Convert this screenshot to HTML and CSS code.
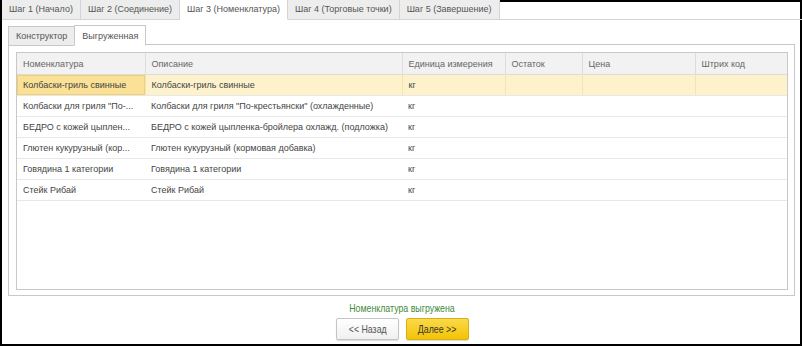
FILE: index.html
```html
<!DOCTYPE html>
<html lang="ru">
<head>
    <meta charset="UTF-8">
    <title>Мастер выгрузки</title>
    <link rel="stylesheet" href="styles.css">
</head>
<body>
    <div class="window">
        <div class="steps">
            <div class="step">Шаг 1 (Начало)</div>
            <div class="step">Шаг 2 (Соединение)</div>
            <div class="step active">Шаг 3 (Номенклатура)</div>
            <div class="step">Шаг 4 (Торговые точки)</div>
            <div class="step">Шаг 5 (Завершение)</div>
            <div class="steps-fill"></div>
        </div>

        <div class="page">
            <div class="subtabs">
                <div class="subtab">Конструктор</div>
                <div class="subtab active">Выгруженная</div>
                <div class="subtabs-fill"></div>
            </div>

            <div class="panel">
                <div class="grid">
                    <table>
                        <colgroup>
                            <col class="c-name">
                            <col class="c-desc">
                            <col class="c-unit">
                            <col class="c-rest">
                            <col class="c-price">
                            <col class="c-code">
                        </colgroup>
                        <thead>
                            <tr>
                                <th>Номенклатура</th>
                                <th>Описание</th>
                                <th>Единица измерения</th>
                                <th>Остаток</th>
                                <th>Цена</th>
                                <th>Штрих код</th>
                            </tr>
                        </thead>
                        <tbody>
                            <tr class="selected">
                                <td class="focus">Колбаски-гриль свинные</td>
                                <td>Колбаски-гриль свинные</td>
                                <td>кг</td>
                                <td></td>
                                <td></td>
                                <td></td>
                            </tr>
                            <tr>
                                <td>Колбаски для гриля "По-...</td>
                                <td>Колбаски для гриля "По-крестьянски" (охлажденные)</td>
                                <td>кг</td>
                                <td></td>
                                <td></td>
                                <td></td>
                            </tr>
                            <tr>
                                <td>БЕДРО с кожей цыплен...</td>
                                <td>БЕДРО с кожей цыпленка-бройлера охлажд. (подложка)</td>
                                <td>кг</td>
                                <td></td>
                                <td></td>
                                <td></td>
                            </tr>
                            <tr>
                                <td>Глютен кукурузный (кор...</td>
                                <td>Глютен кукурузный (кормовая добавка)</td>
                                <td>кг</td>
                                <td></td>
                                <td></td>
                                <td></td>
                            </tr>
                            <tr>
                                <td>Говядина 1 категории</td>
                                <td>Говядина 1 категории</td>
                                <td>кг</td>
                                <td></td>
                                <td></td>
                                <td></td>
                            </tr>
                            <tr>
                                <td>Стейк Рибай</td>
                                <td>Стейк Рибай</td>
                                <td>кг</td>
                                <td></td>
                                <td></td>
                                <td></td>
                            </tr>
                        </tbody>
                    </table>
                </div>
            </div>

            <div class="status"><span class="narrow">Номенклатура выгружена</span></div>

            <div class="actions">
                <button class="btn"><span class="narrow">&lt;&lt; Назад</span></button>
                <button class="btn primary"><span class="narrow">Далее &gt;&gt;</span></button>
            </div>
        </div>
    </div>
</body>
</html>
```

FILE: styles.css
```css
body {
    margin: 0;
    padding: 0;
    background-color: #fff;
    font-family: "Liberation Sans", Arial, sans-serif;
    font-size: 9px;
    color: #444;
}

.window {
    width: 798px;
    height: 344px;
    border: 2px solid #000;
    border-top: none;
    display: flex;
    flex-direction: column;
}

/* step tabs */
.steps {
    display: flex;
    height: 20px;
}

.step {
    height: 19px;
    line-height: 19px;
    padding: 0 7px;
    background-color: #ededed;
    border: 1px solid #d4d4d4;
    border-top: none;
    border-left: none;
    color: #555;
    white-space: nowrap;
}

.step.active {
    background-color: #fff;
    border-bottom-color: #fff;
}

.steps-fill {
    flex: 1;
    border-top: 2px solid #000;
    border-bottom: 1px solid #d4d4d4;
    margin-right: -2px;
}

.page {
    flex: 1;
    display: flex;
    flex-direction: column;
    padding: 5px 5px 0 6px;
}

/* inner tabs */
.subtabs {
    display: flex;
    height: 20px;
}

.subtab {
    margin-top: 1px;
    height: 18px;
    line-height: 18px;
    padding: 0 7px;
    background-color: #ededed;
    border: 1px solid #c8c8c8;
    border-right: none;
    color: #555;
}

.subtab.active {
    margin-top: 0;
    height: 19px;
    line-height: 20px;
    background-color: #fff;
    border-right: 1px solid #c8c8c8;
    border-bottom-color: #fff;
}

.subtabs-fill {
    flex: 1;
    border-bottom: 1px solid #c8c8c8;
}

.panel {
    height: 251px;
    border: 1px solid #c8c8c8;
    border-top: none;
    padding: 7px 6px 6px 7px;
    box-sizing: border-box;
}

.grid {
    height: 238px;
    border: 1px solid #c8c8c8;
    box-sizing: border-box;
}

table {
    width: 100%;
    border-collapse: collapse;
    table-layout: fixed;
}

.c-name { width: 128px; }
.c-desc { width: 257px; }
.c-unit { width: 103px; }
.c-rest { width: 77px; }
.c-price { width: 113px; }

th {
    height: 21px;
    padding: 0 6px;
    text-align: left;
    font-weight: normal;
    color: #666;
    background-color: #f2f2f2;
    border-right: 1px solid #dcdcdc;
    border-bottom: 1px solid #dcdcdc;
    white-space: nowrap;
}

th:last-child {
    border-right: none;
}

td {
    height: 20px;
    padding: 0 6px;
    white-space: nowrap;
    overflow: hidden;
    border-bottom: 1px solid #e8e8e8;
    color: #444;
}

tr.selected td {
    background-color: #fdf2cc;
    border-right: 1px solid #f3e4b0;
}

tr.selected td:last-child {
    border-right: none;
}

tr.selected td.focus {
    background-color: #fae196;
    box-shadow: inset 0 0 0 1px #efd07a;
}

.narrow {
    display: inline-block;
    transform: scaleX(0.8);
}

.status {
    height: 22px;
    line-height: 24px;
    text-align: center;
    color: #3f8a3a;
    font-size: 11px;
}

.actions {
    display: flex;
    justify-content: center;
    gap: 7px;
    padding-left: 2px;
}

.btn {
    width: 63px;
    height: 22px;
    padding: 0;
    font-family: "Liberation Sans", Arial, sans-serif;
    font-size: 11px;
    color: #555;
    background: linear-gradient(#ffffff, #f0f0f0);
    border: 1px solid #c4c4c4;
    border-radius: 2px;
    box-shadow: 0 1px 1px rgba(0, 0, 0, 0.15);
}

.btn.primary {
    color: #333;
    background: linear-gradient(#fad94a, #f3c404);
    border-color: #d8ae1a;
}
```
